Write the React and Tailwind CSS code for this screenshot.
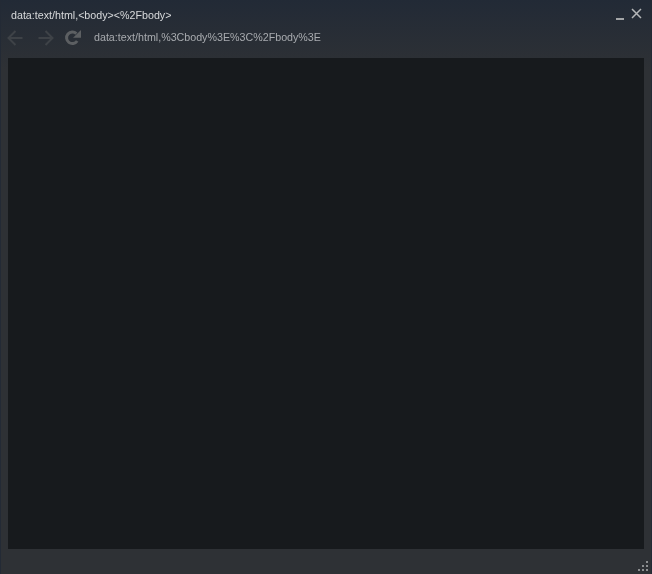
import React from 'react';

function Arrow({ flip }) {
  return (
    <svg width="16" height="16" viewBox="0 0 16 16" fill="none" stroke="#3e4247" strokeWidth="2" className={flip ? 'rotate-180' : ''}>
      <path d="M15.5 8H2M8.5 1L1.5 8l7 7" />
    </svg>
  );
}

function Reload() {
  return (
    <svg width="18" height="18" viewBox="0 0 18 18" fill="none">
      <path d="M12.4 4.6A5.8 5.8 0 1 0 13.2 12" stroke="#5c5f62" strokeWidth="3" />
      <path d="M9 8.8h8V1z" fill="#5c5f62" />
    </svg>
  );
}

function GripDot() {
  return <span className="h-[2px] w-[2px] bg-[#8c8e90]" />;
}

function App() {
  return (
    <div className="flex h-[574px] w-[652px] flex-col overflow-hidden border-x border-[#232a35] bg-gradient-to-b from-[#222a36] to-[#2e3135] to-[12%] font-['Liberation_Sans',Arial,sans-serif]">
      {/* title bar */}
      <div className="flex h-[26px] shrink-0 items-center justify-between pt-[4px] pr-[9px] pl-[10px]">
        <span className="transform-gpu text-[10.7px] leading-none text-[#d8dadc]">data:text/html,&lt;body&gt;&lt;%2Fbody&gt;</span>
        <div className="flex items-center gap-[7px]">
          <div className="mt-[7px] h-[2px] w-[8px] bg-[#a3a5a7]" />
          <svg width="11" height="11" viewBox="0 0 11 11" stroke="#b4b6b8" strokeWidth="1.5" className="-mt-[3px]">
            <path d="M1 1l9 9M10 1l-9 9" />
          </svg>
        </div>
      </div>

      {/* nav row */}
      <div className="flex h-[23px] shrink-0 items-center pl-[6px]">
        <Arrow />
        <div className="ml-[15px]"><Arrow flip /></div>
        <div className="ml-[10px]"><Reload /></div>
        <span className="ml-[12px] transform-gpu text-[10.7px] leading-none text-[#a8abaf]">data:text/html,%3Cbody%3E%3C%2Fbody%3E</span>
      </div>

      {/* page area */}
      <div className="mx-[7px] mt-[9px] min-h-0 flex-1 bg-[#171a1d]" />

      {/* status bar */}
      <div className="relative h-[25px] shrink-0">
        <div className="absolute right-[3px] bottom-[3px] grid grid-cols-3 gap-[2px]">
          <span />
          <span />
          <GripDot />
          <span />
          <GripDot />
          <GripDot />
          <GripDot />
          <GripDot />
          <GripDot />
        </div>
      </div>
    </div>
  );
}

export default App;
